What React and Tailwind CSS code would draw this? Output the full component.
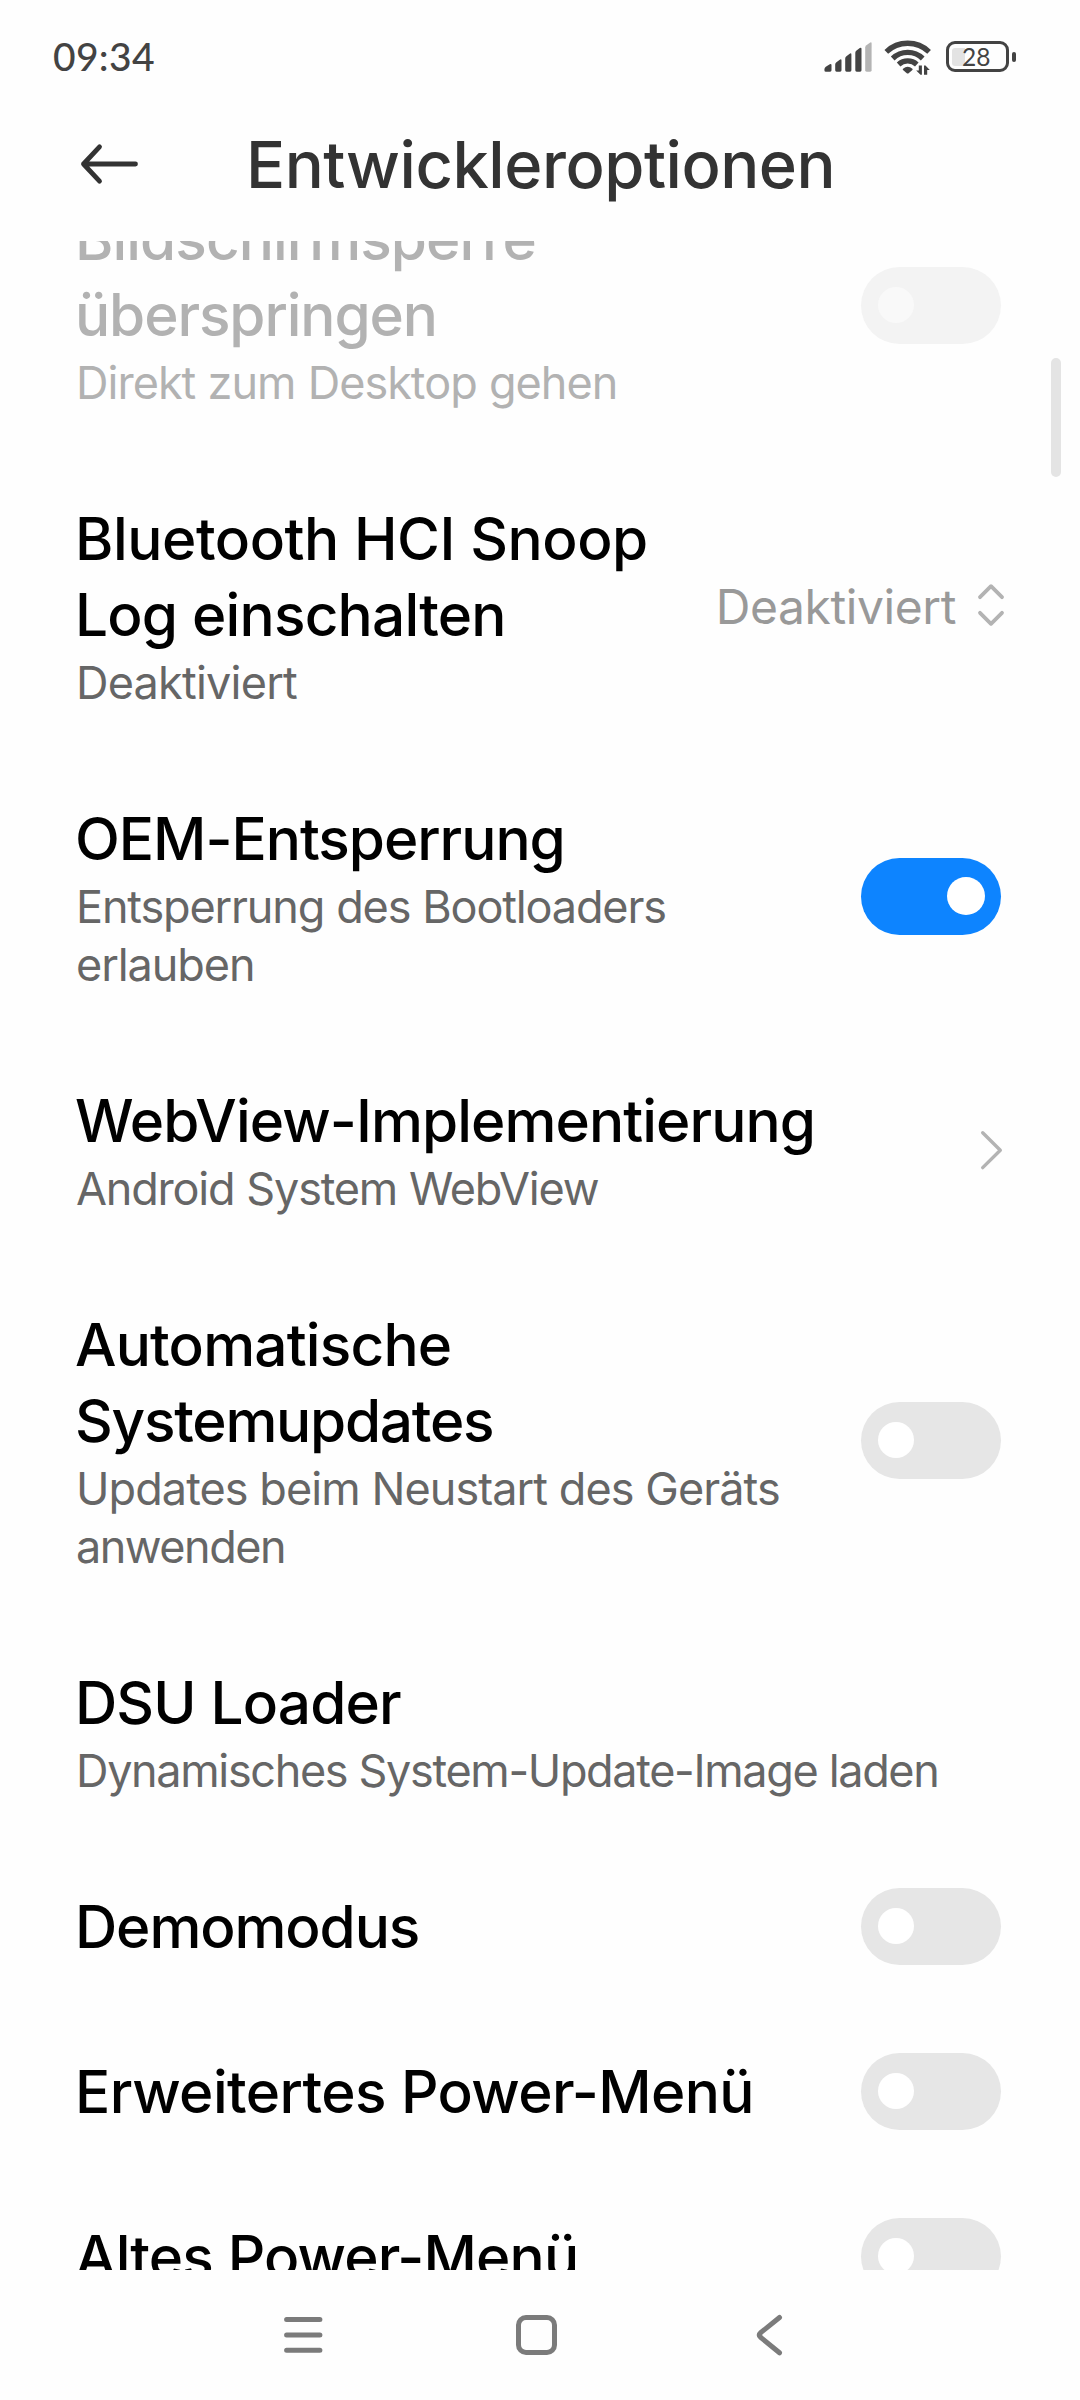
import React from "react";

function Toggle({ on = false, disabled = false, nudge = false }) {
  return (
    <div
      role="switch"
      aria-checked={on}
      className={`flex h-[77px] w-[140px] shrink-0 items-center rounded-full ${nudge ? "mb-px" : ""} ${
        on ? "justify-end bg-[#0d84ff] px-4" : disabled ? "bg-[#f3f3f3] px-[17px]" : "bg-[#e6e6e6] px-[17px]"
      }`}
    >
      <div
        className={`mb-px rounded-full ${
          on ? "size-[38px] bg-white" : disabled ? "size-9 bg-[#f9f9f9]" : "size-9 bg-white"
        }`}
      />
    </div>
  );
}

function Spinner() {
  return (
    <div className="flex items-center">
      <span className="pt-px text-[48px] leading-[58px] tracking-[-0.41px] text-[#999999]">Deaktiviert</span>
      <svg className="mr-[-6px] mb-[2px] ml-[19px] h-[46px] w-[32px]" viewBox="0 0 32 46" fill="none" stroke="#b3b3b3" strokeWidth="3.8" strokeLinecap="round" strokeLinejoin="round">
        <path d="M5 15.2 16 4.2l11 11M5 30.8l11 11 11-11" />
      </svg>
    </div>
  );
}

function Chevron() {
  return (
    <svg className="mr-[-3px] h-[42px] w-[26px]" viewBox="0 0 26 42" fill="none" stroke="#b3b3b3" strokeWidth="3.4" strokeLinecap="round" strokeLinejoin="round">
      <path d="M4.7 3.8 22.3 21.2 4.7 38.6" />
    </svg>
  );
}

const rows = [
  {
    title: [
      ["Bildschirmsperre", "tracking-[-0.93px]"],
      ["überspringen", "tracking-[-1.1px]"],
    ],
    sub: [["Direkt zum Desktop gehen", "tracking-[-0.98px] [word-spacing:0.5px]"]],
    disabled: true,
    control: <Toggle disabled nudge />,
  },
  {
    title: [
      ["Bluetooth HCI Snoop", "tracking-[-0.45px]"],
      ["Log einschalten", "tracking-[-0.8px]"],
    ],
    sub: [["Deaktiviert", "tracking-[-0.78px]"]],
    control: <Spinner />,
  },
  {
    title: [["OEM-Entsperrung", "tracking-[-1.02px]"]],
    sub: [
      ["Entsperrung des Bootloaders", "tracking-[-1.15px] [word-spacing:0.5px]"],
      ["erlauben", "tracking-[-1.06px]"],
    ],
    control: <Toggle on nudge />,
  },
  {
    title: [["WebView-Implementierung", "tracking-[-0.92px]"]],
    sub: [["Android System WebView", "tracking-[-1.2px] [word-spacing:0.5px]"]],
    control: <Chevron />,
  },
  {
    title: [
      ["Automatische", "tracking-[-0.8px]"],
      ["Systemupdates", "tracking-[-1.25px]"],
    ],
    sub: [
      ["Updates beim Neustart des Geräts", "tracking-[-0.93px]"],
      ["anwenden", "tracking-[-1.5px]"],
    ],
    control: <Toggle nudge />,
  },
  {
    title: [["DSU Loader", "tracking-[-0.85px]"]],
    sub: [["Dynamisches System-Update-Image laden", "tracking-[-1.34px]"]],
  },
  { title: [["Demomodus", "tracking-[-1.1px]"]], control: <Toggle /> },
  { title: [["Erweitertes Power-Menü", "tracking-[-0.6px]"]], control: <Toggle /> },
  { title: [["Altes Power-Menü", "tracking-[-0.85px]"]], control: <Toggle /> },
];

function Row({ title, sub, disabled, control }) {
  return (
    <li className="flex items-center justify-between pr-[79px] pl-[76px]">
      <div className="pt-[45px] pb-11 whitespace-nowrap">
        <h2 className={`-ml-px text-[58.5px] leading-[76px] font-medium ${disabled ? "text-[#b2b2b2]" : "text-black"}`}>
          {title.map(([text, style]) => (
            <span key={text} className={`block ${style}`}>{text}</span>
          ))}
        </h2>
        {sub && (
          <p className={`pt-px text-[45px] leading-[58px] ${disabled ? "text-[#b2b2b2]" : "text-[#666666]"}`}>
            {sub.map(([text, style]) => (
              <span key={text} className={`block ${style}`}>{text}</span>
            ))}
          </p>
        )}
      </div>
      {control}
    </li>
  );
}

function StatusBar() {
  return (
    <div className="flex h-[112px] items-center justify-between pr-[64px] pl-[53px] font-[Lato,sans-serif] text-[#434343]">
      <span className="text-[39px] leading-[48px] font-medium tracking-[0.3px]">09:34</span>
      <div className="flex items-center pt-px">
        <svg className="h-8 w-12" viewBox="0 0 48 32" fill="#434343">
          <path d="M.4 28.4q0-1.7 1.4-2.7l4-2.4q1.7-.8 1.7 1v5q0 1.4-1.4 1.4H2Q.4 30.7.4 29.2Z" />
          <path d="M11.2 23.4q0-1.3 1.2-2.2l3.4-2.5q1.7-1 1.7.9v9.7q0 1.4-1.4 1.4h-3.5q-1.4 0-1.4-1.4Z" />
          <path d="M21.2 17.4q0-1.3 1.2-2.2l3.3-2.5q1.7-1 1.7.9v15.7q0 1.4-1.4 1.4h-3.4q-1.4 0-1.4-1.4Z" />
          <path d="M31.3 11.7q0-1.3 1.2-2.2l3.3-2.5q1.7-1 1.7.9v21.4q0 1.4-1.4 1.4h-3.4q-1.4 0-1.4-1.4Z" />
          <path fill="#b4b4b4" d="M41.2 6.4q0-1.3 1.2-2.2l3.5-2.5q1.7-1 1.7.9v26.7q0 1.4-1.4 1.4h-3.6q-1.4 0-1.4-1.4Z" />
        </svg>
        <svg className="mb-px ml-3 h-10 w-12" viewBox="0 0 48 40" fill="none">
          <g stroke="#434343" strokeWidth="5.3">
            <path d="M2.3 15.8a31 31 0 0 1 42.8 0" />
            <path d="M8.7 22.5a21.5 21.5 0 0 1 30 0" />
            <path d="M14.6 28.5a13.5 13.5 0 0 1 18.2 0" />
          </g>
          <path fill="#434343" d="M19 32.7q4.7-3.9 9.4 0 .6.6 0 1.2l-3.5 3.2q-1.2 1-2.4 0L19 33.9q-.6-.6 0-1.2Z" />
          <path fill="#434343" d="M34.8 29.5h3.1v9.3h-1.4l-4.3-4.3h2.6ZM40 38.8V29.5h1.5l4.3 4.4h-2.6v4.9Z" />
        </svg>
        <div className="ml-[14px] flex h-[31px] w-[63px] items-center rounded-[9px] border-[3px] border-[#434343] pl-[3px]">
          <div className="h-[18px] w-[13px] rounded-l-[3px] bg-[#e3e3e3]" />
          <span className="ml-[-3px] text-[24.5px] leading-[28px] text-[#434343]">28</span>
        </div>
        <div className="ml-[3px] h-[10px] w-[4px] rounded-[2px] bg-[#434343]" />
      </div>
    </div>
  );
}

function Header() {
  return (
    <header className="flex h-[105px] items-center pl-[80px]">
      <svg className="mb-[2px] h-[42px] w-[60px]" viewBox="0 0 60 42" fill="none" stroke="#333333" strokeWidth="4.8" strokeLinecap="round" strokeLinejoin="round">
        <path d="M19.5 3.8 3.5 21l16 17.2M3.5 21h52" />
      </svg>
      <h1 className="ml-[106px] text-[65px] leading-[80px] font-medium tracking-[-0.47px] text-[#333333]">
        Entwickleroptionen
      </h1>
    </header>
  );
}

function NavigationBar() {
  return (
    <nav className="flex h-[130px] items-center pl-[283px]">
      <svg className="h-10 w-10" viewBox="0 0 40 40" fill="none" stroke="#7b7b7b" strokeWidth="5" strokeLinecap="round">
        <path d="M3.6 4.6h33.3M3.6 20h33.3M3.6 35.3h33.3" />
      </svg>
      <div className="ml-[193px] h-10 w-[41px] rounded-[10px] border-[5px] border-[#7b7b7b]" />
      <svg className="ml-[198px] h-11 w-8" viewBox="0 0 32 44" fill="none" stroke="#7b7b7b" strokeWidth="5" strokeLinecap="round" strokeLinejoin="round">
        <path d="M24.5 4.5 5.3 20q-2.2 2 0 4l19.2 15.8" />
      </svg>
    </nav>
  );
}

export default function App() {
  return (
    <div className="flex h-[2400px] w-[1080px] flex-col overflow-hidden bg-[#fefefe] font-[Inter,sans-serif]">
      <StatusBar />
      <Header />
      <main className="relative mt-6 h-[2029px] shrink-0 overflow-hidden">
        <ul className="mt-[-85px]">
          {rows.map((row) => (
            <Row key={row.title[0][0]} {...row} />
          ))}
        </ul>
        <div className="absolute top-[117px] right-[19px] h-[119px] w-[10px] rounded-full bg-[#e4e4e4]" />
      </main>
      <NavigationBar />
    </div>
  );
}
